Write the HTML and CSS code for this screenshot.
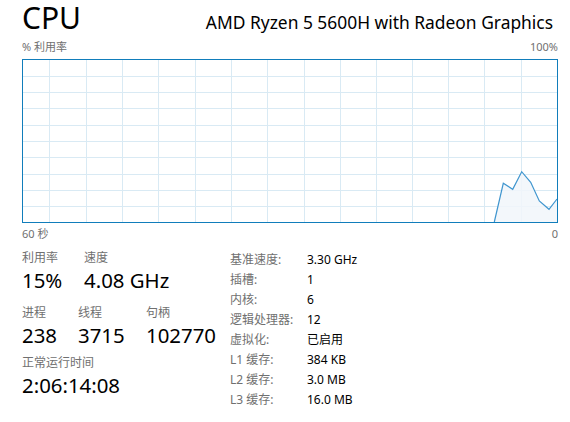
FILE: index.html
```html
<!DOCTYPE html>
<html lang="zh-CN">
<head>
<meta charset="utf-8">
<link rel="stylesheet" href="styles.css">
</head>
<body>
<div class="page">
  <header class="head">
    <h1 class="title">CPU</h1>
    <div class="model">AMD Ryzen 5 5600H with Radeon Graphics</div>
  </header>
  <div class="axis-row top"><span>% 利用率</span><span>100%</span></div>
  <svg class="graph" width="536" height="164" viewBox="0 0 536 164">
    <g stroke="#d9eaf4" stroke-width="1">
      <line x1="0" y1="17.5" x2="536" y2="17.5"/>
      <line x1="0" y1="33.5" x2="536" y2="33.5"/>
      <line x1="0" y1="49.5" x2="536" y2="49.5"/>
      <line x1="0" y1="66.5" x2="536" y2="66.5"/>
      <line x1="0" y1="82.5" x2="536" y2="82.5"/>
      <line x1="0" y1="98.5" x2="536" y2="98.5"/>
      <line x1="0" y1="115.5" x2="536" y2="115.5"/>
      <line x1="0" y1="131.5" x2="536" y2="131.5"/>
      <line x1="0" y1="147.5" x2="536" y2="147.5"/>
      <line x1="27.5" y1="0" x2="27.5" y2="164"/>
      <line x1="64.5" y1="0" x2="64.5" y2="164"/>
      <line x1="100.5" y1="0" x2="100.5" y2="164"/>
      <line x1="136.5" y1="0" x2="136.5" y2="164"/>
      <line x1="173.5" y1="0" x2="173.5" y2="164"/>
      <line x1="209.5" y1="0" x2="209.5" y2="164"/>
      <line x1="245.5" y1="0" x2="245.5" y2="164"/>
      <line x1="282.5" y1="0" x2="282.5" y2="164"/>
      <line x1="318.5" y1="0" x2="318.5" y2="164"/>
      <line x1="354.5" y1="0" x2="354.5" y2="164"/>
      <line x1="390.5" y1="0" x2="390.5" y2="164"/>
      <line x1="426.5" y1="0" x2="426.5" y2="164"/>
      <line x1="462.5" y1="0" x2="462.5" y2="164"/>
      <line x1="499.5" y1="0" x2="499.5" y2="164"/>
    </g>
    <polygon points="472.3,163 481.3,124.3 490.7,130.3 499.7,112.7 508.7,123.3 517.3,142 527,150.3 535,140 535,163" fill="#f1f6fa" fill-opacity="0.85"/>
    <polyline points="472.3,163 481.3,124.3 490.7,130.3 499.7,112.7 508.7,123.3 517.3,142 527,150.3 535,140" fill="none" stroke="#4096cf" stroke-width="1.2"/>
    <rect x="0.5" y="0.5" width="535" height="163" fill="none" stroke="#117dbb" stroke-width="1"/>
  </svg>
  <div class="axis-row bottom"><span>60 秒</span><span>0</span></div>

  <section class="stats">
    <div class="left">
      <div class="row r1">
        <div class="stat w62"><div class="lbl">利用率</div><div class="val">15%</div></div>
        <div class="stat"><div class="lbl">速度</div><div class="val">4.08 GHz</div></div>
      </div>
      <div class="row r2">
        <div class="stat w56"><div class="lbl">进程</div><div class="val">238</div></div>
        <div class="stat w68"><div class="lbl">线程</div><div class="val">3715</div></div>
        <div class="stat"><div class="lbl">句柄</div><div class="val">102770</div></div>
      </div>
      <div class="row r3">
        <div class="stat"><div class="lbl">正常运行时间</div><div class="val">2:06:14:08</div></div>
      </div>
    </div>
    <dl class="specs">
      <dt>基准速度:</dt><dd>3.30 GHz</dd>
      <dt>插槽:</dt><dd>1</dd>
      <dt>内核:</dt><dd>6</dd>
      <dt>逻辑处理器:</dt><dd>12</dd>
      <dt>虚拟化:</dt><dd>已启用</dd>
      <dt>L1 缓存:</dt><dd>384 KB</dd>
      <dt>L2 缓存:</dt><dd>3.0 MB</dd>
      <dt>L3 缓存:</dt><dd>16.0 MB</dd>
    </dl>
  </section>
</div>
</body>
</html>
```

FILE: styles.css
```css
html, body {
  margin: 0;
  padding: 0;
  background: #ffffff;
}
body {
  font-family: "Noto Sans", "Noto Sans CJK SC", sans-serif;
  color: #000;
  width: 570px;
  height: 422px;
  overflow: hidden;
}
.page {
  padding: 0 13px 0 22px;
}
.head {
  display: flex;
  justify-content: space-between;
  align-items: baseline;
  height: 38px;
  box-sizing: border-box;
  padding-top: 3px;
}
.title {
  margin: 0;
  font-weight: 400;
  font-size: 30px;
  line-height: 30px;
}
.model {
  font-size: 17.4px;
  line-height: 24px;
  padding-right: 4px;
}
.axis-row {
  display: flex;
  justify-content: space-between;
  font-size: 11px;
  color: #707070;
  width: 536px;
}
.axis-row.top {
  height: 21px;
  line-height: 18px;
}
.axis-row.bottom {
  height: 22px;
  line-height: 22px;
}
.graph {
  display: block;
}
.stats {
  display: flex;
  margin-top: 4px;
}
.left {
  width: 208px;
}
.row {
  display: flex;
}
.stat .lbl {
  font-size: 12px;
  color: #707070;
  line-height: 18px;
}
.stat .val {
  font-size: 20.4px;
  line-height: 26px;
}
.w62 { width: 62px; }
.w56 { width: 56px; }
.w68 { width: 68px; }
.r2 { margin-top: 11px; }
.r3 { margin-top: 6px; }
.specs {
  display: grid;
  grid-template-columns: 77px auto;
  margin: 1px 0 0;
  font-size: 12px;
  line-height: 20px;
}
.specs dt {
  color: #707070;
}
.specs dd {
  margin: 0;
  color: #000;
}
```
